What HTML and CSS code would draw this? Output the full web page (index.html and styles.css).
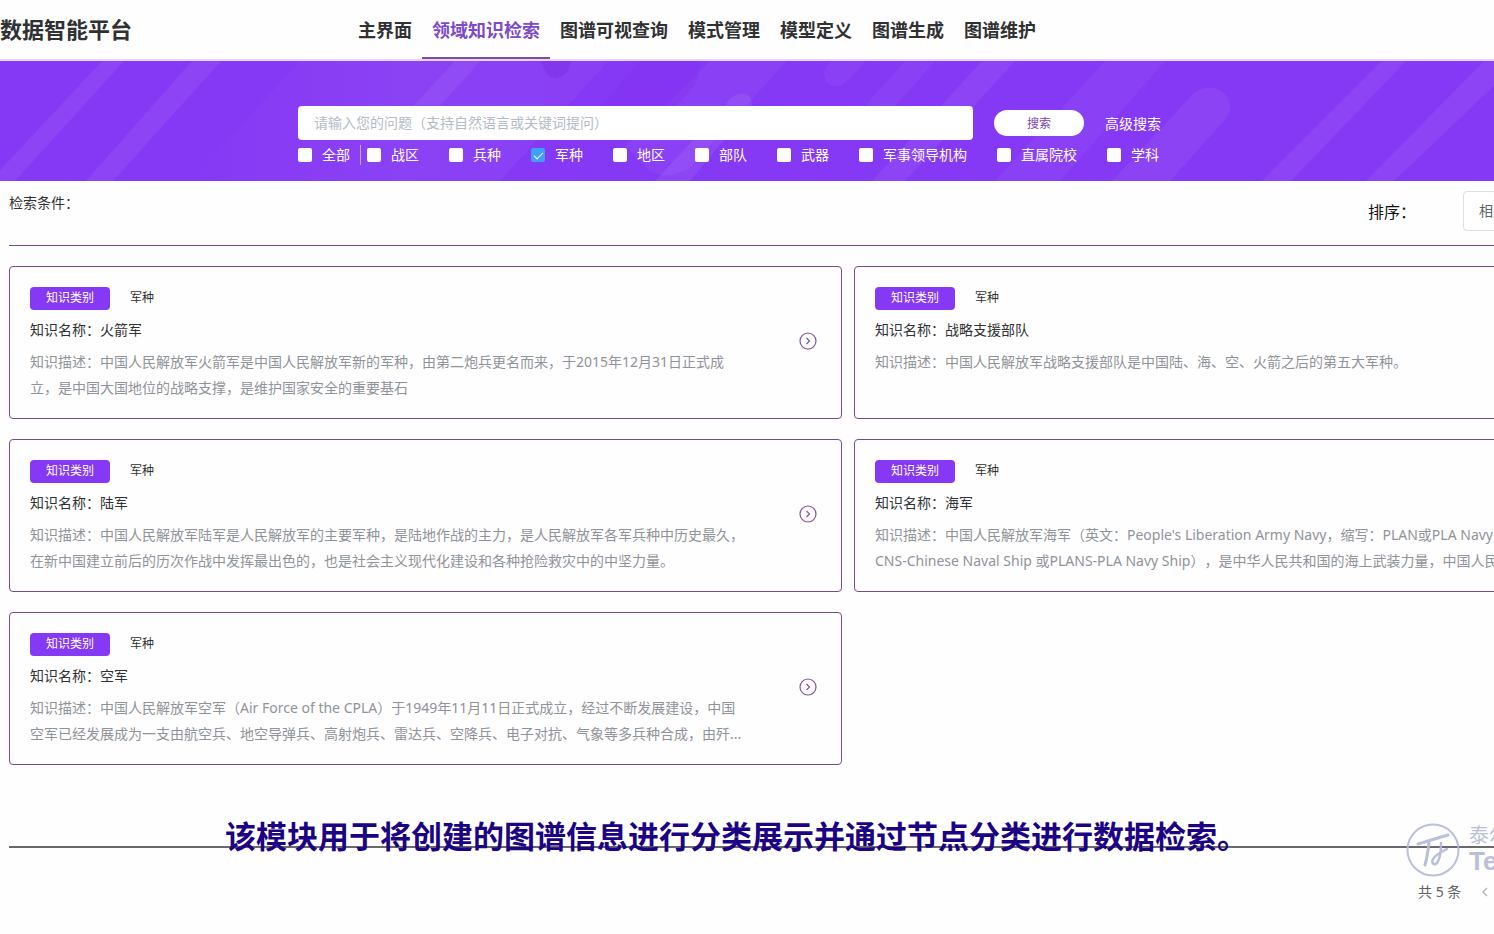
FILE: index.html
```html
<!DOCTYPE html>
<html lang="zh-CN">
<head>
<meta charset="utf-8">
<title>数据智能平台</title>
<link rel="stylesheet" href="styles.css">
</head>
<body>
<div class="page">
  <header class="topbar">
    <h1 class="brand">数据智能平台</h1>
    <nav class="nav">
      <a class="nav-item" href="#">主界面</a>
      <a class="nav-item active" href="#">领域知识检索</a>
      <a class="nav-item" href="#">图谱可视查询</a>
      <a class="nav-item" href="#">模式管理</a>
      <a class="nav-item" href="#">模型定义</a>
      <a class="nav-item" href="#">图谱生成</a>
      <a class="nav-item" href="#">图谱维护</a>
    </nav>
  </header>

  <section class="banner">
    <svg class="banner-art" viewBox="0 0 1696 120" preserveAspectRatio="xMinYMin slice" aria-hidden="true">
      <defs>
        <linearGradient id="haze" x1="0" x2="1" y1="0" y2="0">
          <stop offset="0" stop-color="#fff" stop-opacity="0"/>
          <stop offset="0.5" stop-color="#fff" stop-opacity="0.04"/>
          <stop offset="1" stop-color="#fff" stop-opacity="0.03"/>
        </linearGradient>
      </defs>
      <path d="M300 0H608L500 120H190Z" fill="url(#haze)"/>
      <g fill="#fff" fill-opacity="0.06">
        <path d="M102 0H124L15 120H-10Z"/>
        <path d="M192 0H221L113 120H86Z"/>
        <path d="M455 0H480L440 45H413Z"/>
        <path d="M1382 0H1406L1291 120H1262Z"/>
        <path d="M1484 0H1520L1394 120H1366Z"/>
        <path d="M982 0H1015L905 120H872Z"/>
      </g>
      <g fill="#fff" fill-opacity="0.04">
        <path d="M710 0H787L690 106Q670 120 650 110L625 85Z"/>
        <path d="M905 0H935L880 62H850Z"/>
        <path d="M1105 0H1165L1060 120H995Z"/>
        <path d="M824 10Q824 26 838 25Q846 24 866 0H830Z"/>
      </g>
      <path d="M725 45C732 30 752 26 752 45L690 120H655Z" fill="#fff" fill-opacity="0.07"/>
      <path d="M1194 32C1212 18 1236 34 1229 52Q1227 58 1222 62L1170 120H1112Z" fill="#fff" fill-opacity="0.05"/>
      <path d="M541 0H571Q568 16 555 17Q545 15 541 0Z" fill="#7428dc" fill-opacity="0.35"/>
      <path d="M640 0H698Q702 16 690 30L670 52H595Z" fill="#7b2cf0" fill-opacity="0.25"/>
    </svg>
    <form class="search">
      <div class="search-row">
        <input class="search-input" type="text" aria-label="问题" placeholder="请输入您的问题（支持自然语言或关键词提问）">
        <button class="search-btn" type="button">搜索</button>
        <a class="advanced" href="#">高级搜索</a>
      </div>
      <div class="checks">
        <label class="check"><input type="checkbox">全部</label>
        <span class="divider"></span>
        <label class="check"><input type="checkbox">战区</label>
        <label class="check"><input type="checkbox">兵种</label>
        <label class="check"><input type="checkbox" checked>军种</label>
        <label class="check"><input type="checkbox">地区</label>
        <label class="check"><input type="checkbox">部队</label>
        <label class="check"><input type="checkbox">武器</label>
        <label class="check"><input type="checkbox">军事领导机构</label>
        <label class="check"><input type="checkbox">直属院校</label>
        <label class="check"><input type="checkbox">学科</label>
      </div>
    </form>
  </section>

  <main class="main">
    <div class="filter">
      <span class="filter-label">检索条件：</span>
      <label class="sort-label" for="sort">排序：</label>
      <select class="sort" id="sort"><option>相关度</option></select>
    </div>

    <div class="cards">
      <article class="card">
        <div class="card-body">
          <div class="card-head"><span class="tag">知识类别</span><span class="kind">军种</span></div>
          <h2 class="name">知识名称：火箭军</h2>
          <p class="desc">知识描述：中国人民解放军火箭军是中国人民解放军新的军种，由第二炮兵更名而来，于2015年12月31日正式成立，是中国大国地位的战略支撑，是维护国家安全的重要基石</p>
        </div>
        <button class="more" type="button" aria-label="查看"><svg viewBox="0 0 18 18"><circle cx="9" cy="9" r="8"/><path d="M7.5 6L10.5 9L7.5 12"/></svg></button>
      </article>
      <article class="card">
        <div class="card-body">
          <div class="card-head"><span class="tag">知识类别</span><span class="kind">军种</span></div>
          <h2 class="name">知识名称：战略支援部队</h2>
          <p class="desc">知识描述：中国人民解放军战略支援部队是中国陆、海、空、火箭之后的第五大军种。</p>
        </div>
        <button class="more" type="button" aria-label="查看"><svg viewBox="0 0 18 18"><circle cx="9" cy="9" r="8"/><path d="M7.5 6L10.5 9L7.5 12"/></svg></button>
      </article>
      <article class="card">
        <div class="card-body">
          <div class="card-head"><span class="tag">知识类别</span><span class="kind">军种</span></div>
          <h2 class="name">知识名称：陆军</h2>
          <p class="desc">知识描述：中国人民解放军陆军是人民解放军的主要军种，是陆地作战的主力，是人民解放军各军兵种中历史最久，在新中国建立前后的历次作战中发挥最出色的，也是社会主义现代化建设和各种抢险救灾中的中坚力量。</p>
        </div>
        <button class="more" type="button" aria-label="查看"><svg viewBox="0 0 18 18"><circle cx="9" cy="9" r="8"/><path d="M7.5 6L10.5 9L7.5 12"/></svg></button>
      </article>
      <article class="card">
        <div class="card-body">
          <div class="card-head"><span class="tag">知识类别</span><span class="kind">军种</span></div>
          <h2 class="name">知识名称：海军</h2>
          <p class="desc">知识描述：中国人民解放军海军（英文：People's Liberation Army Navy，缩写：PLAN或PLA Navy，<br>CNS-Chinese Naval Ship 或PLANS-PLA Navy Ship），是中华人民共和国的海上武装力量，中国人民</p>
        </div>
        <button class="more" type="button" aria-label="查看"><svg viewBox="0 0 18 18"><circle cx="9" cy="9" r="8"/><path d="M7.5 6L10.5 9L7.5 12"/></svg></button>
      </article>
      <article class="card">
        <div class="card-body">
          <div class="card-head"><span class="tag">知识类别</span><span class="kind">军种</span></div>
          <h2 class="name">知识名称：空军</h2>
          <p class="desc">知识描述：中国人民解放军空军（Air Force of the CPLA）于1949年11月11日正式成立，经过不断发展建设，中国空军已经发展成为一支由航空兵、地空导弹兵、高射炮兵、雷达兵、空降兵、电子对抗、气象等多兵种合成，由歼...</p>
        </div>
        <button class="more" type="button" aria-label="查看"><svg viewBox="0 0 18 18"><circle cx="9" cy="9" r="8"/><path d="M7.5 6L10.5 9L7.5 12"/></svg></button>
      </article>
    </div>

    <footer class="footer">
      <div class="watermark">
        <svg class="mark" viewBox="0 0 54 54" aria-hidden="true">
          <circle cx="27" cy="27" r="25.5" stroke-width="2"/>
          <path d="M12 21L42 12" stroke-width="3"/>
          <path d="M23 20C22 28 21 35 19 42" stroke-width="3"/>
          <path d="M35 20C35 29 34 36 31 40C28 43 25 40 27 36C29 32 35 29 41 26" stroke-width="2.5"/>
        </svg>
        <div class="mark-text"><span class="mark-cn">泰尔</span><span class="mark-en">Teir</span></div>
      </div>
      <p class="caption">该模块用于将创建的图谱信息进行分类展示并通过节点分类进行数据检索。</p>
      <div class="pager">
        <span>共 5 条</span>
        <button class="prev" type="button" aria-label="上一页" disabled><svg viewBox="0 0 8 12"><path d="M6 2L2 6L6 10"/></svg></button>
      </div>
    </footer>
  </main>
</div>
</body>
</html>
```
FILE: styles.css
```css
* {
  box-sizing: border-box;
}

body {
  margin: 0;
  overflow: hidden;
  background: #fefefe;
  color: #303133;
  font-family: "Noto Sans", "Noto Sans CJK SC", sans-serif;
  font-size: 14px;
  text-spacing-trim: space-all;
}

h1, h2, p {
  margin: 0;
}

a {
  color: inherit;
  text-decoration: none;
}

button, input, select {
  font-family: inherit;
}

.page {
  min-width: 1696px;
}

.topbar {
  display: flex;
  height: 61px;
  border-bottom: 2px solid #e9d5fb;
}

.brand {
  width: 348px;
  font-size: 22px;
  line-height: 59px;
}

.nav {
  display: flex;
}

.nav-item {
  padding: 0 10px;
  font-size: 18px;
  font-weight: bold;
  line-height: 61px;
}

.nav-item.active {
  color: #7d4acb;
  border-bottom: 2px solid #7f4f9f;
}

.banner {
  position: relative;
  height: 120px;
  padding: 45px 0 0 298px;
  overflow: hidden;
  background: #8639f4;
  color: #fff;
}

.banner-art {
  position: absolute;
  top: 0;
  left: 0;
  width: 100%;
  height: 100%;
}

.search {
  position: relative;
}

.search-row {
  display: flex;
  align-items: center;
}

.search-input {
  width: 675px;
  height: 34px;
  padding: 0 16px 2px;
  border: 0;
  border-radius: 4px;
  background: #fff;
  font-size: 14px;
}

.search-input::placeholder {
  color: #b4bbc5;
}

.search-btn {
  width: 90px;
  height: 26px;
  margin: 0 21px;
  padding: 0;
  border: 0;
  border-radius: 13px;
  background: #fff;
  color: #7a45b0;
  font-size: 12px;
}

.checks {
  display: flex;
  align-items: center;
  gap: 30px;
  padding-top: 5px;
}

.check {
  display: flex;
  align-items: center;
  gap: 10px;
  line-height: 20px;
}

.check input {
  display: grid;
  place-items: center;
  width: 14px;
  height: 14px;
  margin: 0;
  appearance: none;
  border-radius: 2px;
  background: #fff;
}

.check input:checked {
  background: #409eff;
}

.check input:checked::after {
  content: "";
  width: 8px;
  height: 4px;
  margin-bottom: 2px;
  border: solid #fff;
  border-width: 0 0 1px 1px;
  transform: rotate(-45deg);
}

.divider {
  width: 1px;
  height: 20px;
  margin: 0 -25px 0 -20px;
  background: #c9a5f7;
}

.divider + .check {
  margin-left: 1px;
}

.main {
  padding: 0 9px;
}

.filter {
  display: flex;
  align-items: flex-start;
  height: 65px;
  padding-top: 10px;
  border-bottom: 1px solid #764d8a;
}

.filter-label {
  line-height: 24px;
}

.sort-label {
  width: 95px;
  margin-left: auto;
  color: #111;
  font-size: 16px;
  line-height: 42px;
}

.sort {
  width: 224px;
  height: 40px;
  padding: 0 15px 2px;
  appearance: none;
  border: 1px solid #dcdfe6;
  border-radius: 4px;
  background: #fff;
  color: #606266;
  font-size: 14px;
}

.cards {
  display: grid;
  grid-template-columns: 1fr 1fr;
  gap: 20px 12px;
  padding: 20px 0 81px;
}

.card {
  display: flex;
  align-items: center;
  justify-content: space-between;
  min-height: 153px;
  padding: 20px 24px 17px 20px;
  border: 1px solid #764d8a;
  border-radius: 4px;
}

.card-body {
  align-self: flex-start;
  width: 716px;
}

.card-head {
  display: flex;
  gap: 20px;
  font-size: 12px;
  line-height: 22px;
}

.tag {
  width: 80px;
  height: 23px;
  border-radius: 4px;
  background: #8639f4;
  color: #fff;
  text-align: center;
}

.name {
  margin: 10px 0 9px;
  font-size: 14px;
  font-weight: normal;
  line-height: 20px;
}

.desc {
  color: #909399;
  line-height: 26px;
}

.more {
  width: 18px;
  height: 18px;
  margin-bottom: 6px;
  padding: 0;
  border: 0;
  background: none;
}

.more svg {
  display: block;
  fill: none;
  stroke: #8450a8;
  stroke-width: 1.2;
}

.footer {
  position: relative;
  border-top: 2px solid #6b686d;
}

.caption {
  position: absolute;
  top: -35px;
  left: 216px;
  color: #1b0384;
  font-size: 31px;
  font-weight: bold;
  line-height: 46px;
  white-space: nowrap;
}

.watermark {
  position: absolute;
  top: -25px;
  left: 1397px;
  display: flex;
  gap: 9px;
  color: #b3bad6;
  opacity: 0.9;
}

.mark {
  width: 54px;
  height: 54px;
  fill: none;
  stroke: currentColor;
  stroke-linecap: round;
}

.mark-text {
  display: flex;
  flex-direction: column;
}

.mark-cn {
  font-size: 20px;
  line-height: 26px;
}

.mark-en {
  font-family: "Liberation Sans", sans-serif;
  font-size: 26px;
  font-weight: bold;
  line-height: 24px;
}

.pager {
  display: flex;
  align-items: center;
  width: 269px;
  margin-left: auto;
  padding-top: 30px;
  color: #606266;
  line-height: 28px;
}

.prev {
  width: 28px;
  height: 28px;
  margin-left: 10px;
  padding: 0;
  border: 0;
  background: none;
}

.prev svg {
  display: block;
  width: 8px;
  height: 12px;
  margin: auto;
  fill: none;
  stroke: #b4b8c0;
  stroke-width: 1.5;
}
```
